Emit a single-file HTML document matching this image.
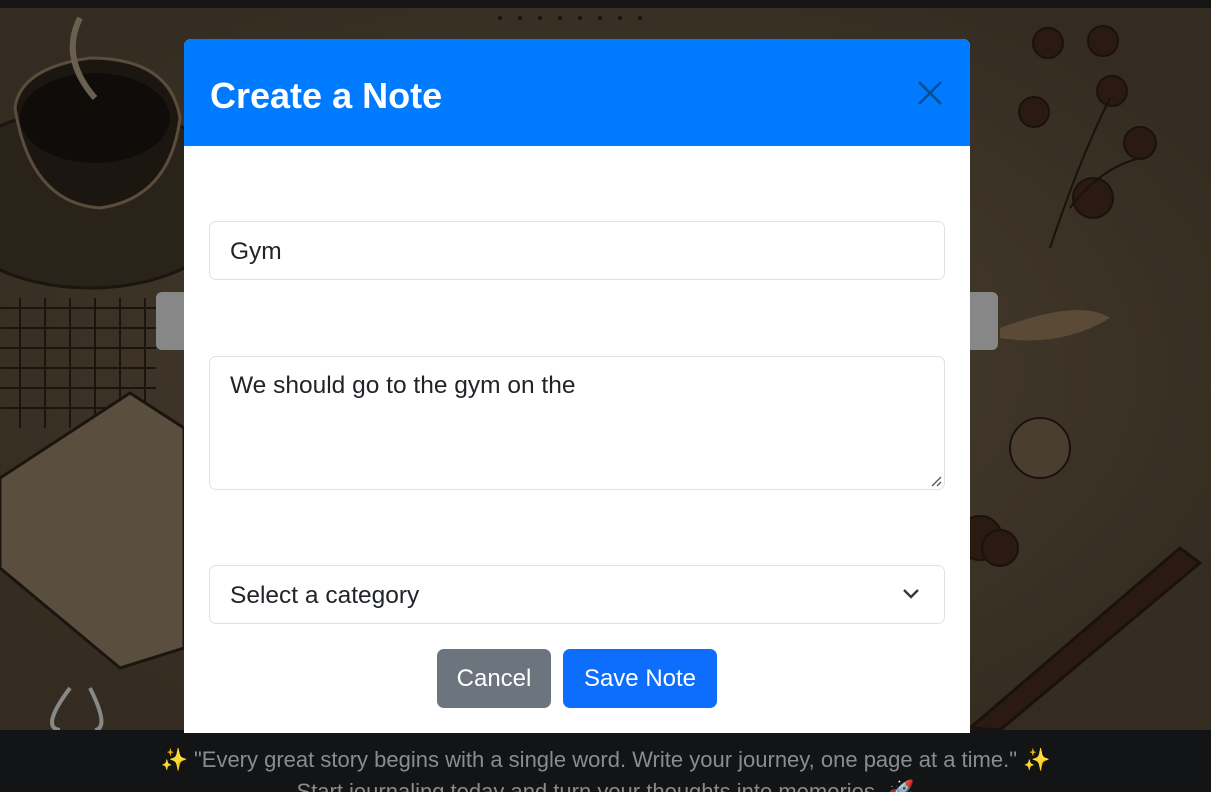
<!DOCTYPE html>
<html><head><meta charset="utf-8"><style>
*{box-sizing:border-box;margin:0;padding:0}
html,body{width:1211px;height:792px;overflow:hidden;background:#121416;font-family:"Liberation Sans","DejaVu Sans",sans-serif}
.top{position:absolute;left:0;top:0;width:1211px;height:8px;background:#151515}
.bg{position:absolute;left:0;top:8px;width:1211px;height:722px;background:#3e3527;overflow:hidden}
.footer{position:absolute;left:0;top:730px;width:1211px;height:62px;background:#121416;color:#8a8c8e;font-size:22px;text-align:center;overflow:hidden;white-space:nowrap}
.footer .l1{position:absolute;top:17px;width:100%}
.footer .l2{position:absolute;top:49px;width:100%}
.spark{color:#b08a3a}
.search{position:absolute;left:156px;width:842px;height:58px;background:#878787;border-radius:6px}
.modal{position:absolute;left:184px;top:39px;width:786px;height:694px;background:#fff;border-radius:7px 7px 0 0;overflow:hidden}
.hdr{height:107px;background:#007bff;position:relative}
.hdr h1{position:absolute;left:26px;top:35px;font-size:36px;font-weight:bold;color:#fff;line-height:44px}
.x{position:absolute;left:734px;top:42px}
.inp{position:absolute;left:25px;width:736px;border:1px solid #dee2e6;border-radius:7px;font-size:24.5px;color:#212529;padding-left:20px;background:#fff}
.btn{position:absolute;top:610px;height:59px;border-radius:7px;color:#fff;font-size:24px;text-align:center;line-height:60px}
</style></head><body>
<div class="top"></div>
<div class="bg">
<svg width="1211" height="722" style="position:absolute;left:0;top:0">
<defs><radialGradient id="g" cx="0.5" cy="0.5" r="0.6"><stop offset="0" stop-color="#4a4032"/><stop offset="1" stop-color="#342c20"/></radialGradient></defs>
<rect width="1211" height="722" fill="url(#g)"/>
<ellipse cx="90" cy="190" rx="150" ry="90" fill="#2a231a" stroke="#1a150f" stroke-width="3"/>
<path d="M15 100 Q20 60 90 50 Q170 50 180 110 Q170 190 100 200 Q30 195 15 100Z" fill="#1c1611" stroke="#5a4d3c" stroke-width="3"/>
<ellipse cx="95" cy="110" rx="75" ry="45" fill="#0f0c09"/>
<path d="M80 10 Q60 50 95 90" stroke="#6a6050" stroke-width="6" fill="none"/>
<g stroke="#1a150f" stroke-width="2">
<path d="M0 300 H156 M0 320 H156 M0 340 H156 M0 360 H156 M0 380 H156 M0 400 H140"/>
<path d="M20 290 V420 M45 290 V420 M70 290 V420 M95 290 V420 M120 290 V420 M145 290 V420"/>
</g>
<path d="M0 470 L130 385 L184 420 L184 640 L120 660 L0 560Z" fill="#5a4e3e" stroke="#1a150f" stroke-width="3"/>
<path d="M70 680 Q40 720 60 722 M90 680 Q110 720 95 722" stroke="#888" stroke-width="4" fill="none"/>
<g fill="#2a1a12" stroke="#1a120c" stroke-width="2">
<circle cx="1048" cy="35" r="15"/><circle cx="1103" cy="33" r="15"/><circle cx="1112" cy="83" r="15"/><circle cx="1034" cy="104" r="15"/><circle cx="1140" cy="135" r="16"/><circle cx="1093" cy="190" r="20"/>
<circle cx="1040" cy="440" r="30" fill="#4a3e30"/><circle cx="980" cy="530" r="22"/><circle cx="1000" cy="540" r="18"/>
</g>
<path d="M1050 240 Q1080 150 1110 90 M1070 200 Q1100 160 1140 150" stroke="#1a120c" stroke-width="2" fill="none"/>
<path d="M970 720 L1180 540 L1200 555 L1000 722Z" fill="#2a1a12" stroke="#1a120c" stroke-width="3"/>
<path d="M1000 320 Q1080 290 1110 310 Q1060 340 1000 330Z" fill="#5a4a36"/>
<g fill="#1a140e"><circle cx="500" cy="10" r="2"/><circle cx="520" cy="10" r="2"/><circle cx="540" cy="10" r="2"/><circle cx="560" cy="10" r="2"/><circle cx="580" cy="10" r="2"/><circle cx="600" cy="10" r="2"/><circle cx="620" cy="10" r="2"/><circle cx="640" cy="10" r="2"/></g>
</svg>
<div class="search" style="top:284px"></div>
</div>
<div class="footer">
<div class="l1"><span class="spark">✨</span> "Every great story begins with a single word. Write your journey, one page at a time." <span class="spark">✨</span></div>
<div class="l2">Start journaling today and turn your thoughts into memories. 🚀</div>
</div>
<div class="modal">
<div class="hdr"><h1>Create a Note</h1>
<svg class="x" width="24" height="24" viewBox="0 0 24 24"><path d="M1 1L23 23M23 1L1 23" stroke="#0b4d8c" stroke-width="2.6"/></svg>
</div>
<div class="inp" style="top:182px;height:59px;line-height:60px">Gym</div>
<div class="inp" style="top:317px;height:134px;padding-top:15px;line-height:28px">We should go to the gym on the
<svg style="position:absolute;right:2px;bottom:2px" width="12" height="12"><path d="M11 2L2 11M11 7L7 11" stroke="#555" stroke-width="1.3"/></svg></div>
<div class="inp" style="top:526px;height:59px;line-height:60px">Select a category
<svg style="position:absolute;right:24px;top:22px" width="18" height="12" viewBox="0 0 18 12"><path d="M2 2L9 9L16 2" stroke="#343a40" stroke-width="2.4" fill="none"/></svg></div>
<div class="btn" style="left:253px;width:114px;background:#6c757d">Cancel</div>
<div class="btn" style="left:379px;width:154px;background:#0d6efd">Save Note</div>
</div>
</body></html>
